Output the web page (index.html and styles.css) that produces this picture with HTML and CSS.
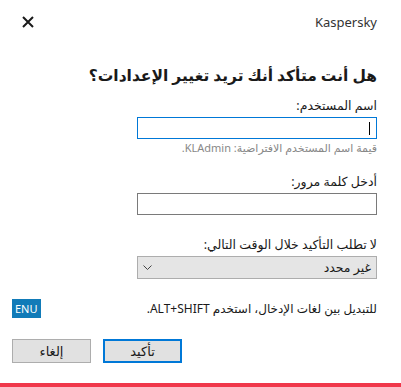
FILE: index.html
```html
<!DOCTYPE html>
<html lang="ar" dir="rtl">
<head>
    <meta charset="UTF-8">
    <title>Kaspersky</title>
    <link rel="stylesheet" href="styles.css">
</head>
<body>
    <div class="dialog">
        <div class="topbar">
            <span class="brand">Kaspersky</span>
            <span class="close">
                <svg width="12" height="12" viewBox="0 0 12 12"><path d="M1 1 L11 11 M11 1 L1 11" stroke="#1a1a1a" stroke-width="2"/></svg>
            </span>
        </div>

        <h1 class="title">هل أنت متأكد أنك تريد تغيير الإعدادات؟</h1>

        <div class="field field-user">
            <label class="label">اسم المستخدم:</label>
            <div class="box box-focus"><span class="caret"></span></div>
            <div class="hint">قيمة اسم المستخدم الافتراضية: KLAdmin.</div>
        </div>

        <div class="field field-pass">
            <label class="label">أدخل كلمة مرور:</label>
            <div class="box"></div>
        </div>

        <div class="field">
            <label class="label">لا تطلب التأكيد خلال الوقت التالي:</label>
            <div class="box select">
                <span>غير محدد</span>
                <svg width="9" height="5" viewBox="0 0 9 5"><path d="M0.5 0.5 L4.5 4.5 L8.5 0.5" fill="none" stroke="#444" stroke-width="1"/></svg>
            </div>
        </div>

        <div class="langrow">
            <span>للتبديل بين لغات الإدخال، استخدم ALT+SHIFT.</span>
            <span class="badge">ENU</span>
        </div>

        <div class="buttons">
            <button class="btn btn-default">تأكيد</button>
            <button class="btn">إلغاء</button>
        </div>
    </div>
    <div class="redbar"></div>
</body>
</html>
```

FILE: styles.css
```css
/* نافذة تأكيد الإعدادات */
:root {
    --blue: #0078d7;
    --text: #1a1a1a;
    --gray-border: #adadad;
    --btn-bg: #e1e1e1;
    --red: #f0384b;
}

body {
    margin: 0;
    background: #ffffff;
    color: var(--text);
    font-family: 'Noto Sans', 'DejaVu Sans', sans-serif;
    font-size: 12.5px;
    line-height: 16px;
    width: 401px;
    height: 387px;
    display: flex;
    flex-direction: column;
}
.dialog {
    flex: 1;
    padding: 0 24px 0 12px;
}
.topbar {
    display: flex;
    justify-content: space-between;
    align-items: center;
    height: 44px;
}
.brand {
    color: #333;
    font-size: 13px;
}
.close {
    display: flex;
    margin-left: 10px;
}
.title {
    font-size: 15.5px;
    line-height: 20px;
    font-weight: bold;
    margin: 21px 0 13px;
}
.field-user {
    margin-bottom: 18px;
}
.field-pass {
    margin-bottom: 22px;
}
.label {
    display: block;
    margin-bottom: 3px;
}
.box {
    width: 238px;
    height: 20px;
    border: 1px solid #7a7a7a;
    position: relative;
}
.box-focus {
    border-color: var(--blue);
}
.caret {
    position: absolute;
    right: 6px;
    top: 4px;
    width: 1px;
    height: 13px;
    background: #000;
}
.hint {
    color: #888;
    font-size: 11px;
    margin-top: 1px;
}
.select {
    background: #e5e5e5;
    border-color: var(--gray-border);
    display: flex;
    justify-content: space-between;
    align-items: center;
    padding: 0 5px;
    width: 228px;
    height: 21px;
}
.langrow {
    display: flex;
    justify-content: space-between;
    align-items: center;
    margin-top: 20px;
    font-size: 12px;
}
.badge {
    background: #117bb8;
    color: #fff;
    font-size: 11px;
    line-height: 19px;
    padding: 0 3px;
    direction: ltr;
}
.buttons {
    display: flex;
    justify-content: flex-end;
    gap: 12px;
    margin-top: 21px;
}
.btn {
    width: 79px;
    height: 24px;
    background: var(--btn-bg);
    border: 1px solid var(--gray-border);
    font-family: inherit;
    font-size: 13px;
    color: var(--text);
}
.btn-default {
    border: 2px solid var(--blue);
}
.redbar {
    height: 4px;
    background: var(--red);
}
```
